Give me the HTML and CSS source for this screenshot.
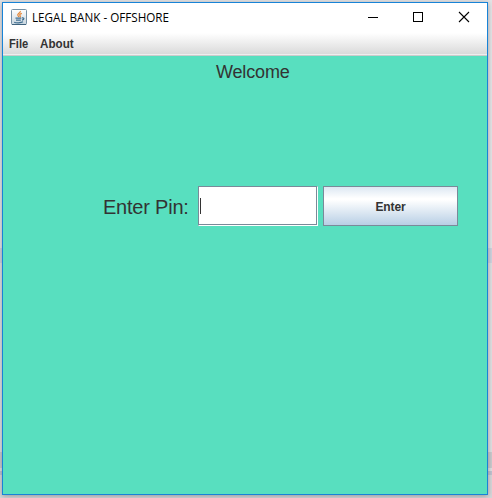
FILE: index.html
```html
<!DOCTYPE html>
<html lang="en">
<head>
<meta charset="utf-8">
<title>LEGAL BANK - OFFSHORE</title>
<link rel="stylesheet" href="styles.css">
</head>
<body>
<div class="window">
  <header class="titlebar">
    <svg class="app-icon" width="16" height="16" viewBox="0 0 16 16">
      <defs><linearGradient id="tile" x1="0" y1="0" x2="0" y2="1"><stop offset="0" stop-color="#fff"/><stop offset="1" stop-color="#c7d5df"/></linearGradient></defs>
      <rect x=".5" y=".5" width="15" height="15" rx="1" fill="url(#tile)" stroke="#7590a5"/>
      <path d="M1 15.5h14" stroke="#3f637e"/>
      <path d="M9.3 2c.6 2-3.6 2.8-2.4 4.5l1 1.5M10.8 4.4C8.3 5.2 8.4 6 9.2 6.8c.5.6 0 1.1-.4 1.5" fill="none" stroke="#e58331" stroke-width="1.2"/>
      <path d="M4.5 9.2h5.8M5 11.2h4.8M3.2 13.2c2 .9 6.8.8 8.8-.4M11 8.9c2.6-.4 2.4 1.6 0 2.2" fill="none" stroke="#416f91" stroke-width="1.2"/>
    </svg>
    <h1 class="title"><span>LEGAL BANK - OFFSHORE</span></h1>
    <svg class="controls" width="120" height="20" viewBox="0 0 120 20" fill="none" stroke="#000" shape-rendering="crispEdges">
      <path d="M8 10.5h10"/>
      <rect x="53.5" y="5.5" width="9" height="9"/>
      <path d="M99 5l10 10M109 5L99 15" shape-rendering="auto" stroke-width="1.1"/>
    </svg>
  </header>
  <nav class="menubar"><span class="file">File</span><span class="about">About</span></nav>
  <main class="content">
    <p class="welcome">Welcome</p>
    <form class="pin-row">
      <label class="pin-label">Enter Pin:</label>
      <div class="field"><span class="caret"></span></div>
      <button class="enter" type="button"><span>Enter</span></button>
    </form>
  </main>
</div>
</body>
</html>
```
FILE: styles.css
```css
* { box-sizing: border-box; }
body {
  margin: 0;
  width: 492px;
  height: 498px;
  padding: 2px;
  overflow: hidden;
  font-family: "Liberation Sans", Arial, sans-serif;
  color: #333;
  background: linear-gradient(#e3e3e5 0 248px, #cdd2de 248px 263px, #dedfe1 263px 452px, #c9cacd 452px 468px, #dedfe1 468px 471px, #bec2cf 471px 475px, #d6d6d9 475px);
}
.window {
  width: 486px;
  height: 493px;
  border: 1px solid #1883d7;
  background: #58dfbf;
  box-shadow: 0 1px 5px rgba(0, 0, 0, .3);
}
.titlebar {
  height: 30px;
  display: flex;
  align-items: center;
  padding-left: 8px;
  background: #fff;
}
.app-icon { margin-top: -2px; }
.title {
  width: 138px;
  margin: -1px 0 0 5px;
  font: 12px/16px "Open Sans", sans-serif;
  color: #000;
  white-space: nowrap;
}
.title span { display: inline-block; transform: scaleX(.972); transform-origin: left; }
.controls { margin: -2px 7px 0 auto; }
.menubar {
  height: 23px;
  display: flex;
  padding: 4px 6px 0;
  font-size: 12px;
  font-weight: bold;
  line-height: 14px;
  background: linear-gradient(#fff, #dadada 21px, #eee 21px);
  border-bottom: 1px solid #ccc;
}
.file { width: 31px; transform: scaleX(.93); transform-origin: left; }
.about { transform: scaleX(.97); transform-origin: left; }
.content { display: flex; flex-direction: column; }
.welcome {
  margin: 5px 0 0 213px;
  font-size: 18px;
  line-height: 22px;
  letter-spacing: -.15px;
}
.pin-row { display: flex; align-items: center; margin: 103px 0 0 100px; height: 40px; }
.pin-label { width: 95px; padding-top: 2px; font-size: 20px; line-height: 24px; letter-spacing: -.22px; white-space: nowrap; }
.field {
  width: 120px;
  height: 40px;
  padding: 11px 0 0 1px;
  border: 1px solid #7a8a99;
  border-right-color: #fff;
  border-bottom-color: #fff;
  background: #fff;
  box-shadow: inset -1px -1px #7a8a99;
}
.caret { display: block; width: 1px; height: 16px; background: #333; }
.enter {
  width: 135px;
  height: 40px;
  margin-left: 5px;
  padding: 2px 0 0;
  border: 1px solid #7a8a99;
  background: linear-gradient(#dde8f3, #fff 30%, #fff 34%, #b8cfe5);
  font: bold 12px/14px "Liberation Sans", Arial, sans-serif;
  letter-spacing: -.1px;
  color: #333;
}
```
